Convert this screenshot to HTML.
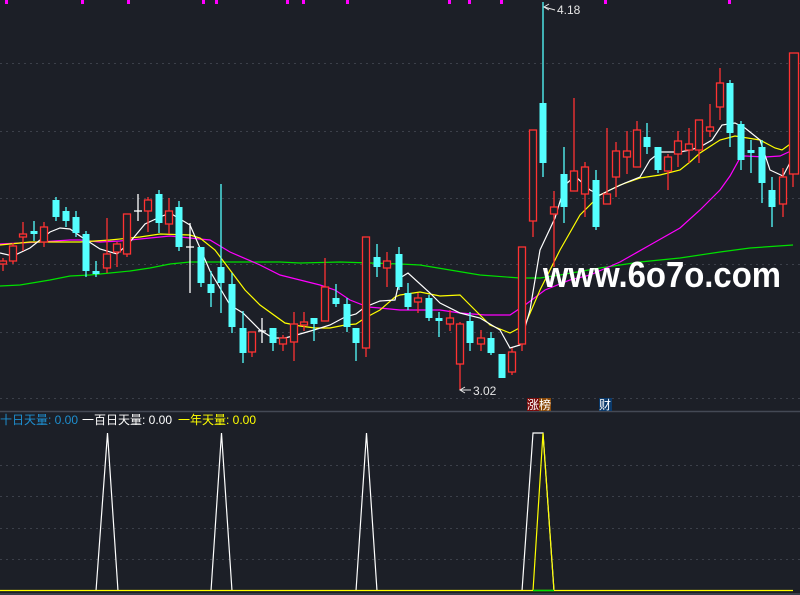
<!DOCTYPE html>
<html><head><meta charset="utf-8"><style>
html,body{margin:0;padding:0;background:#1c1f27;}
svg{display:block}
</style></head><body>
<svg width="800" height="595" viewBox="0 0 800 595" xmlns="http://www.w3.org/2000/svg">
<rect width="800" height="595" fill="#1c1f27"/>
<g stroke="#3c404a" stroke-width="1" stroke-dasharray="2,4">
<line x1="0" y1="63.5" x2="800" y2="63.5"/>
<line x1="0" y1="131.5" x2="800" y2="131.5"/>
<line x1="0" y1="198.5" x2="800" y2="198.5"/>
<line x1="0" y1="264.5" x2="800" y2="264.5"/>
<line x1="0" y1="332.5" x2="800" y2="332.5"/>
<line x1="0" y1="398.5" x2="800" y2="398.5"/>
<line x1="0" y1="465.5" x2="800" y2="465.5"/>
<line x1="0" y1="496.5" x2="800" y2="496.5"/>
<line x1="0" y1="528.5" x2="800" y2="528.5"/>
<line x1="0" y1="559.5" x2="800" y2="559.5"/>
</g>
<line x1="0" y1="411.5" x2="800" y2="411.5" stroke="#444955" stroke-width="1.5"/>
<line x1="0" y1="594" x2="800" y2="594" stroke="#444955" stroke-width="1.5"/>
<g fill="#ff00ff">
<rect x="5" y="0" width="3" height="4"/><rect x="81" y="0" width="3" height="4"/><rect x="127" y="0" width="3" height="4"/><rect x="202" y="0" width="3" height="4"/><rect x="215" y="0" width="3" height="4"/><rect x="286" y="0" width="3" height="4"/><rect x="302" y="0" width="3" height="4"/><rect x="346" y="0" width="3" height="4"/><rect x="448" y="0" width="3" height="4"/><rect x="468" y="0" width="3" height="4"/><rect x="500" y="0" width="3" height="4"/><rect x="604" y="0" width="3" height="4"/><rect x="728" y="0" width="3" height="4"/>
</g>
<!-- MA lines -->
<g fill="none" stroke-width="1.2">
<polyline stroke="#00e000" points="0,286 20,285 50,280 70,276 90,275 110,273 130,271 150,268 170,264 190,262 210,262 250,262 280,262 300,263 340,262 370,263 400,264 420,265 450,270 480,275 520,278 540,278 560,275 600,268 640,262 680,258 720,252 750,248 793,245"/>
<polyline stroke="#ff00ff" points="0,244 40,242 70,240 80,240 100,242 120,241 150,238 170,236 190,238 210,240 230,252 260,265 280,275 300,280 320,285 335,290 350,300 368,307 380,308 400,310 420,310 440,310 460,313 485,315 510,315 525,305 545,290 570,280 590,275 620,262 650,245 680,228 700,210 720,190 730,176 740,158 745,156 765,157 780,156 793,150"/>
<polyline stroke="#ffff00" points="0,245 30,242 60,242 80,242 110,240 140,237 160,234 190,235 200,238 215,250 230,270 245,290 260,305 285,323 300,326 315,328 330,328 345,325 356,324 365,318 380,310 395,297 400,295 420,292 440,296 460,295 470,305 490,325 510,333 525,325 540,290 560,250 580,215 600,195 620,185 640,178 660,175 680,170 690,162 700,153 720,140 735,136 760,140 775,148 782,150 793,142"/>
<polyline stroke="#ffffff" points="0,253 13,256 30,248 50,232 60,228 70,229 80,236 100,249 117,254 130,242 145,224 160,217 170,213 180,219 190,225 200,248 210,271 230,305 243,313 260,330 273,338 285,338 300,334 314,330 330,325 345,317 356,314 365,307 380,301 395,300 400,278 408,273 430,293 440,303 460,313 480,318 500,330 510,348 520,345 530,310 540,250 555,218 565,185 575,176 590,190 600,195 610,190 625,183 640,177 650,160 660,152 680,152 690,150 700,147 712,140 722,125 735,123 745,128 760,140 770,170 783,176 793,157"/>
</g>
<!-- candles: red hollow -->
<g stroke="#ff3232" stroke-width="1.3">
<line x1="3" y1="258" x2="3" y2="271"/><line x1="13" y1="243" x2="13" y2="264"/><line x1="23" y1="222" x2="23" y2="251"/><line x1="44" y1="222" x2="44" y2="247"/><line x1="107" y1="218" x2="107" y2="273"/><line x1="117" y1="242" x2="117" y2="267"/><line x1="127" y1="214" x2="127" y2="257"/><line x1="148" y1="197" x2="148" y2="232"/><line x1="169" y1="198" x2="169" y2="234"/><line x1="252" y1="332" x2="252" y2="357"/><line x1="283" y1="335" x2="283" y2="351"/><line x1="294" y1="312" x2="294" y2="361"/><line x1="304" y1="312" x2="304" y2="331"/><line x1="325" y1="258" x2="325" y2="321"/><line x1="366" y1="237" x2="366" y2="357"/><line x1="387" y1="252" x2="387" y2="287"/><line x1="418" y1="293" x2="418" y2="313"/><line x1="450" y1="310" x2="450" y2="331"/><line x1="460" y1="322" x2="460" y2="390"/><line x1="481" y1="330" x2="481" y2="351"/><line x1="512" y1="348" x2="512" y2="375"/><line x1="522" y1="247" x2="522" y2="351"/><line x1="533" y1="130" x2="533" y2="237"/><line x1="554" y1="191" x2="554" y2="267"/><line x1="574" y1="98" x2="574" y2="191"/><line x1="585" y1="162" x2="585" y2="217"/><line x1="607" y1="128" x2="607" y2="204"/><line x1="616" y1="142" x2="616" y2="197"/><line x1="627" y1="131" x2="627" y2="174"/><line x1="637" y1="121" x2="637" y2="167"/><line x1="668" y1="154" x2="668" y2="190"/><line x1="678" y1="131" x2="678" y2="167"/><line x1="689" y1="128" x2="689" y2="163"/><line x1="699" y1="120" x2="699" y2="163"/><line x1="710" y1="104" x2="710" y2="137"/><line x1="720" y1="68" x2="720" y2="120"/><line x1="783" y1="168" x2="783" y2="217"/><line x1="793" y1="53" x2="793" y2="187"/>
</g>
<g stroke="#ff3232" stroke-width="1.3" fill="#1c1f27">
<rect x="-0.5" y="261" width="7" height="3"/><rect x="9.5" y="246" width="7" height="15"/><rect x="19.5" y="234" width="7" height="3"/><rect x="40.5" y="227" width="7" height="15"/><rect x="103.5" y="254" width="7" height="14"/><rect x="113.5" y="244" width="7" height="8"/><rect x="123.5" y="214" width="7" height="40"/><rect x="144.5" y="200" width="7" height="11"/><rect x="165.5" y="211" width="7" height="13"/><rect x="248.5" y="332" width="7" height="20"/><rect x="279.5" y="338" width="7" height="6"/><rect x="290.5" y="324" width="7" height="18"/><rect x="300.5" y="322" width="7" height="3"/><rect x="321.5" y="287" width="7" height="34"/><rect x="362.5" y="237" width="7" height="111"/><rect x="383.5" y="261" width="7" height="7"/><rect x="414.5" y="298" width="7" height="4"/><rect x="446.5" y="318" width="7" height="6"/><rect x="456.5" y="324" width="7" height="40"/><rect x="477.5" y="338" width="7" height="6"/><rect x="508.5" y="352" width="7" height="20"/><rect x="518.5" y="247" width="7" height="97"/><rect x="529.5" y="130" width="7" height="91"/><rect x="550.5" y="207" width="7" height="7"/><rect x="570.5" y="171" width="7" height="20"/><rect x="581.5" y="167" width="7" height="27"/><rect x="603.5" y="194" width="7" height="10"/><rect x="612.5" y="151" width="7" height="26"/><rect x="623.5" y="151" width="7" height="6"/><rect x="633.5" y="130" width="7" height="37"/><rect x="664.5" y="157" width="7" height="14"/><rect x="674.5" y="141" width="7" height="13"/><rect x="685.5" y="144" width="7" height="6"/><rect x="695.5" y="120" width="7" height="30"/><rect x="706.5" y="127" width="7" height="4"/><rect x="716.5" y="83" width="7" height="24"/><rect x="779.5" y="177" width="7" height="27"/><rect x="789.5" y="53" width="9" height="121"/>
</g>
<!-- cyan -->
<g stroke="#54ffff" stroke-width="1.3">
<line x1="34" y1="221" x2="34" y2="241"/><line x1="56" y1="197" x2="56" y2="221"/><line x1="66" y1="207" x2="66" y2="227"/><line x1="76" y1="211" x2="76" y2="237"/><line x1="86" y1="231" x2="86" y2="277"/><line x1="96" y1="261" x2="96" y2="277"/><line x1="159" y1="190" x2="159" y2="233"/><line x1="179" y1="201" x2="179" y2="251"/><line x1="201" y1="247" x2="201" y2="287"/><line x1="211" y1="271" x2="211" y2="307"/><line x1="221" y1="184" x2="221" y2="313"/><line x1="232" y1="273" x2="232" y2="333"/><line x1="243" y1="311" x2="243" y2="363"/><line x1="273" y1="328" x2="273" y2="351"/><line x1="314" y1="318" x2="314" y2="341"/><line x1="336" y1="284" x2="336" y2="307"/><line x1="347" y1="298" x2="347" y2="332"/><line x1="356" y1="328" x2="356" y2="361"/><line x1="377" y1="244" x2="377" y2="277"/><line x1="399" y1="247" x2="399" y2="290"/><line x1="408" y1="283" x2="408" y2="310"/><line x1="429" y1="295" x2="429" y2="321"/><line x1="439" y1="312" x2="439" y2="337"/><line x1="470" y1="312" x2="470" y2="351"/><line x1="491" y1="332" x2="491" y2="355"/><line x1="502" y1="354" x2="502" y2="378"/><line x1="543" y1="2" x2="543" y2="177"/><line x1="564" y1="147" x2="564" y2="223"/><line x1="596" y1="170" x2="596" y2="230"/><line x1="647" y1="123" x2="647" y2="154"/><line x1="658" y1="147" x2="658" y2="173"/><line x1="730" y1="80" x2="730" y2="147"/><line x1="741" y1="121" x2="741" y2="170"/><line x1="751" y1="140" x2="751" y2="173"/><line x1="762" y1="140" x2="762" y2="203"/><line x1="772" y1="177" x2="772" y2="227"/>
</g>
<g fill="#54ffff">
<rect x="30.5" y="231" width="7" height="3"/><rect x="52.5" y="200" width="7" height="17"/><rect x="62.5" y="211" width="7" height="10"/><rect x="72.5" y="217" width="7" height="16"/><rect x="82.5" y="234" width="7" height="37"/><rect x="92.5" y="271" width="7" height="3"/><rect x="155.5" y="194" width="7" height="29"/><rect x="175.5" y="207" width="7" height="40"/><rect x="197.5" y="247" width="7" height="36"/><rect x="207.5" y="284" width="7" height="9"/><rect x="217.5" y="267" width="7" height="16"/><rect x="228.5" y="284" width="7" height="43"/><rect x="239.5" y="328" width="7" height="25"/><rect x="269.5" y="328" width="7" height="15"/><rect x="310.5" y="318" width="7" height="6"/><rect x="332.5" y="298" width="7" height="6"/><rect x="343.5" y="304" width="7" height="23"/><rect x="352.5" y="328" width="7" height="15"/><rect x="373.5" y="257" width="7" height="10"/><rect x="395.5" y="254" width="7" height="33"/><rect x="404.5" y="293" width="7" height="14"/><rect x="425.5" y="298" width="7" height="20"/><rect x="435.5" y="318" width="7" height="3"/><rect x="466.5" y="321" width="7" height="22"/><rect x="487.5" y="338" width="7" height="15"/><rect x="498.5" y="354" width="7" height="24"/><rect x="539.5" y="103" width="7" height="60"/><rect x="560.5" y="174" width="7" height="33"/><rect x="592.5" y="180" width="7" height="47"/><rect x="643.5" y="137" width="7" height="10"/><rect x="654.5" y="147" width="7" height="23"/><rect x="726.5" y="83" width="7" height="50"/><rect x="737.5" y="124" width="7" height="36"/><rect x="747.5" y="150" width="7" height="3"/><rect x="758.5" y="147" width="7" height="36"/><rect x="768.5" y="190" width="7" height="17"/>
</g>
<!-- white crosses -->
<g stroke="#ffffff" stroke-width="1.3">
<line x1="138" y1="194" x2="138" y2="221"/><line x1="134" y1="211" x2="142" y2="211"/>
<line x1="190" y1="223" x2="190" y2="293"/><line x1="186" y1="247" x2="194" y2="247"/>
<line x1="262" y1="318" x2="262" y2="343"/><line x1="258" y1="331" x2="266" y2="331"/>
</g>
<!-- labels -->
<g font-family="Liberation Sans, sans-serif" font-size="12" fill="#e6e6e6">
<polyline points="549,4 544,7 549,10" fill="none" stroke="#e6e6e6"/><line x1="544" y1="7" x2="555" y2="10" stroke="#e6e6e6"/>
<text x="557" y="14">4.18</text>
<polyline points="465,387 460,390 465,393" fill="none" stroke="#e6e6e6"/><line x1="460" y1="390" x2="471" y2="390" stroke="#e6e6e6"/>
<text x="473" y="395">3.02</text>
</g>
<text x="543" y="287" font-family="Liberation Sans, sans-serif" font-weight="bold" font-size="36" fill="#ffffff" textLength="238" lengthAdjust="spacingAndGlyphs">www.6o7o.com</text>
<rect x="527" y="398" width="12" height="13" fill="#7a0c0c"/><rect x="539" y="398" width="12" height="13" fill="#8a4a0a"/>
<rect x="599" y="398" width="13" height="13" fill="#0b3a6b"/>
<g font-family="Liberation Sans, 'Noto Sans CJK SC', sans-serif" font-size="12" fill="#ffffff">
<text x="527" y="409">涨榜</text><text x="599" y="409">财</text>
</g>
<g font-family="Liberation Sans, 'Noto Sans CJK SC', sans-serif" font-size="12">
<text x="0" y="424" fill="#1e8fd0">十日天量: 0.00</text>
<text x="82" y="424" fill="#ffffff">一百日天量: 0.00</text>
<text x="178" y="424" fill="#ffff00">一年天量: 0.00</text>
</g>
<!-- lower indicator -->
<g fill="none" stroke-width="1.2">
<polyline stroke="#ffffff" points="96,591 107.5,433 118,591"/>
<polyline stroke="#ffffff" points="211,591 221.5,433 232,591"/>
<polyline stroke="#ffffff" points="356,591 366.5,433 377,591"/>
<polyline stroke="#ffffff" points="522,591 533,433 543,433 554,591"/>
<polyline stroke="#ffff00" points="533,591 543,433 554,591"/>
</g>
<line x1="0" y1="590.5" x2="793" y2="590.5" stroke="#ffff00" stroke-width="1.3"/>
<line x1="533" y1="590.5" x2="554" y2="590.5" stroke="#00e000" stroke-width="1.5"/>
</svg>
</body></html>
